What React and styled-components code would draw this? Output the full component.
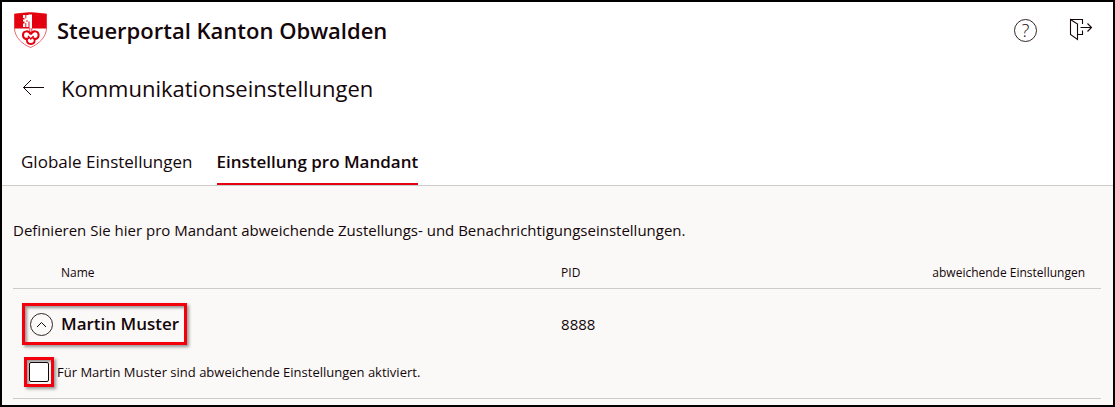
import React, { useState } from "react";
import styled, { createGlobalStyle } from "styled-components";

const GlobalStyle = createGlobalStyle`
    *, *::before, *::after {
        box-sizing: border-box;
    }
    body {
        margin: 0;
        color: #14060a;
        font-family: "Segoe UI", "Open Sans", "Noto Sans", sans-serif;
    }
    button {
        padding: 0;
        border: none;
        background: none;
        color: inherit;
        font: inherit;
        cursor: pointer;
    }
    svg {
        display: block;
    }
`;

const Page = styled.div`
    display: flex;
    flex-direction: column;
    min-height: 100vh;
    border: 2px solid #000000;
    background-color: #ffffff;
`;

const Header = styled.header`
    display: flex;
    align-items: center;
    gap: 10px;
    padding: 8px 20px 8px 12px;
`;

const PortalTitle = styled.span`
    flex: 1;
    font-size: 22px;
    line-height: 40px;
    font-weight: 600;
`;

const HeaderActions = styled.div`
    display: flex;
    align-items: center;
    gap: 32px;
`;

const CircleButton = styled.button`
    display: flex;
    flex: none;
    align-items: center;
    justify-content: center;
    width: 23px;
    height: 23px;
    border: 1px solid #33262a;
    border-radius: 50%;
    font-size: 18px;
    line-height: 20px;
    font-weight: 300;
`;

const TitleBar = styled.div`
    display: flex;
    align-items: center;
    gap: 16px;
    padding: 8px 20px;
`;

const PageTitle = styled.h1`
    margin: 0;
    font-size: 22px;
    line-height: 44px;
    font-weight: 400;
`;

const Tabs = styled.nav`
    display: flex;
    gap: 24px;
    padding: 20px 19px 0;
    border-bottom: 1px solid #cccccc;
`;

const Tab = styled.button`
    padding: 8px 0 6px;
    border-bottom: 2px solid ${({ $active }) => ($active ? "#e3000f" : "transparent")};
    font-size: 17px;
    line-height: 31px;
    font-weight: ${({ $active }) => ($active ? 600 : 400)};
`;

const Content = styled.main`
    flex: 1;
    padding: 32px 12px 4px 11px;
    background-color: #faf9f7;
`;

const Intro = styled.p`
    margin: 0 0 16px;
    font-size: 15px;
    line-height: 24px;
`;

const MandantTable = styled.table`
    width: 100%;
    border-collapse: collapse;
    table-layout: fixed;
`;

const Row = styled.tr`
    border-bottom: ${({ $line }) => ($line ? "1px solid #cccccc" : "none")};
`;

const HeadCell = styled.th`
    width: ${({ $width }) => $width};
    padding: 6px ${({ $end }) => ($end ? "16px" : "0")} 6px ${({ $indent }) => ($indent ? "48px" : "0")};
    text-align: ${({ $end }) => ($end ? "right" : "left")};
    font-size: 12px;
    line-height: 18px;
    font-weight: 400;
    white-space: nowrap;
`;

const Cell = styled.td`
    padding: ${({ $padding }) => $padding || "0"};
    font-size: 15px;
    line-height: 24px;
`;

const Highlight = styled.span`
    display: inline-flex;
    vertical-align: top;
    padding: ${({ $padding }) => $padding};
    border: 3px solid #f3000c;
    box-shadow: 2px 2px 3px rgba(0, 0, 0, 0.4), inset 2px 2px 3px rgba(0, 0, 0, 0.4);
`;

const Expander = styled.button`
    display: flex;
    align-items: center;
    gap: 8px;
    font-size: 17px;
    line-height: 24px;
    font-weight: 600;
`;

const ExpanderIcon = styled(CircleButton).attrs({ as: "span" })``;

const OptionRow = styled.div`
    display: flex;
    align-items: center;
    gap: 3px;
    font-size: 13px;
    line-height: 20px;
`;

const Checkbox = styled.input`
    appearance: none;
    width: 20px;
    height: 20px;
    margin: 0;
    border: 1px solid #14060a;
    border-radius: 2px;
    background-color: #ffffff;

    &:checked {
        background-color: #e3000f;
    }
`;

const Logo = () => (
    <svg width="33" height="36" viewBox="0 0 33 36" aria-hidden="true">
        <path d="M.5 2Q16.500-1 32.500 2V16C32.500 25 25 32 16.500 35.500C8 32 .5 25 .5 16Z" fill="#fff" stroke="#e3000f" strokeWidth="0.600" />
        <path d="M.5 2Q16.500-1 32.500 2V16.500H.5Z" fill="#e3000f" />
        <path d="M15.500 2.500H18V16.500H15.500V9.500H14.500V15H9V11.500H10.500V9.500H9V7.500H10.500V6H9V3H14.500V2.500Z" fill="#fff" />
        <path d="M11.800 3V6.500M11.800 11V15M12 9H14" stroke="#e3000f" strokeWidth="0.900" />
        <g fill="none" stroke="#e3000f" strokeWidth="2">
            <path d="M15.800 16.500V22M17.800 16.500V22" strokeWidth="0.800" />
            <path d="M16.800 22.500C15 18 9 18.500 9 23C9 27 13 28 15 25.500" />
            <path d="M16.800 22.500C18.600 18 24.600 18.500 24.600 23C24.600 27 20.600 28 18.600 25.500" />
            <path d="M13.500 26C11.500 29.500 14 32 16.800 32C19.600 32 22.100 29.500 20.100 26" />
            <path d="M14 24L16.800 27L19.600 24" strokeWidth="1.300" />
        </g>
    </svg>
);

const BackIcon = () => (
    <svg width="23" height="18" viewBox="0 0 23 18" fill="none" stroke="#14060a" strokeWidth="1">
        <path d="M22 8.500H1.500M9 1L1.500 8.500L9 16" />
    </svg>
);

const LogoutIcon = () => (
    <svg width="24" height="24" viewBox="0 0 24 24" fill="none" stroke="#14060a" strokeWidth="1.100">
        <path d="M1.500 1.500L8.500 6V21.500L1.500 16.500ZM1.500 1.500H13.500V6M8.500 16.500H13.500V12.500" />
        <path d="M11.500 9.500H22.500M18.500 5.500L22.500 9.500L18.500 13.500" />
    </svg>
);

const ChevronIcon = ({ open }) => (
    <svg width="11" height="7" viewBox="0 0 11 7" fill="none" stroke="#14060a" strokeWidth="1">
        <path d={open ? "M1 6L5.500 1.500L10 6" : "M1 1L5.500 5.500L10 1"} />
    </svg>
);

const Mandant = ({ name, pid }) => {
    const [open, setOpen] = useState(true);
    const [active, setActive] = useState(false);

    return (
        <tbody>
            <Row $line={!open}>
                <Cell $padding="14px 0 6px 9px">
                    <Highlight $padding="6px 5px">
                        <Expander aria-expanded={open} onClick={() => setOpen(!open)}>
                            <ExpanderIcon><ChevronIcon open={open} /></ExpanderIcon>
                            {name}
                        </Expander>
                    </Highlight>
                </Cell>
                <Cell $padding="8px 0 0">{pid}</Cell>
                <Cell />
            </Row>
            {open && (
                <Row $line>
                    <Cell colSpan={3} $padding="6px 0 11px 11px">
                        <OptionRow>
                            <Highlight $padding="2px">
                                <Checkbox
                                    type="checkbox"
                                    id={`aktiv-${pid}`}
                                    checked={active}
                                    onChange={(e) => setActive(e.target.checked)}
                                />
                            </Highlight>
                            <label htmlFor={`aktiv-${pid}`}>
                                Für {name} sind abweichende Einstellungen aktiviert.
                            </label>
                        </OptionRow>
                    </Cell>
                </Row>
            )}
        </tbody>
    );
};

const App = () => (
    <Page>
        <GlobalStyle />
        <Header>
            <Logo />
            <PortalTitle>Steuerportal Kanton Obwalden</PortalTitle>
            <HeaderActions>
                <CircleButton aria-label="Hilfe">?</CircleButton>
                <button aria-label="Abmelden"><LogoutIcon /></button>
            </HeaderActions>
        </Header>
        <TitleBar>
            <button aria-label="Zurück"><BackIcon /></button>
            <PageTitle>Kommunikationseinstellungen</PageTitle>
        </TitleBar>
        <Tabs>
            <Tab>Globale Einstellungen</Tab>
            <Tab $active aria-current="page">Einstellung pro Mandant</Tab>
        </Tabs>
        <Content>
            <Intro>Definieren Sie hier pro Mandant abweichende Zustellungs- und Benachrichtigungseinstellungen.</Intro>
            <MandantTable>
                <thead>
                    <Row $line>
                        <HeadCell $indent>Name</HeadCell>
                        <HeadCell $width="34%">PID</HeadCell>
                        <HeadCell $width="170px" $end>abweichende Einstellungen</HeadCell>
                    </Row>
                </thead>
                <Mandant name="Martin Muster" pid="8888" />
            </MandantTable>
        </Content>
    </Page>
);

export default App;
